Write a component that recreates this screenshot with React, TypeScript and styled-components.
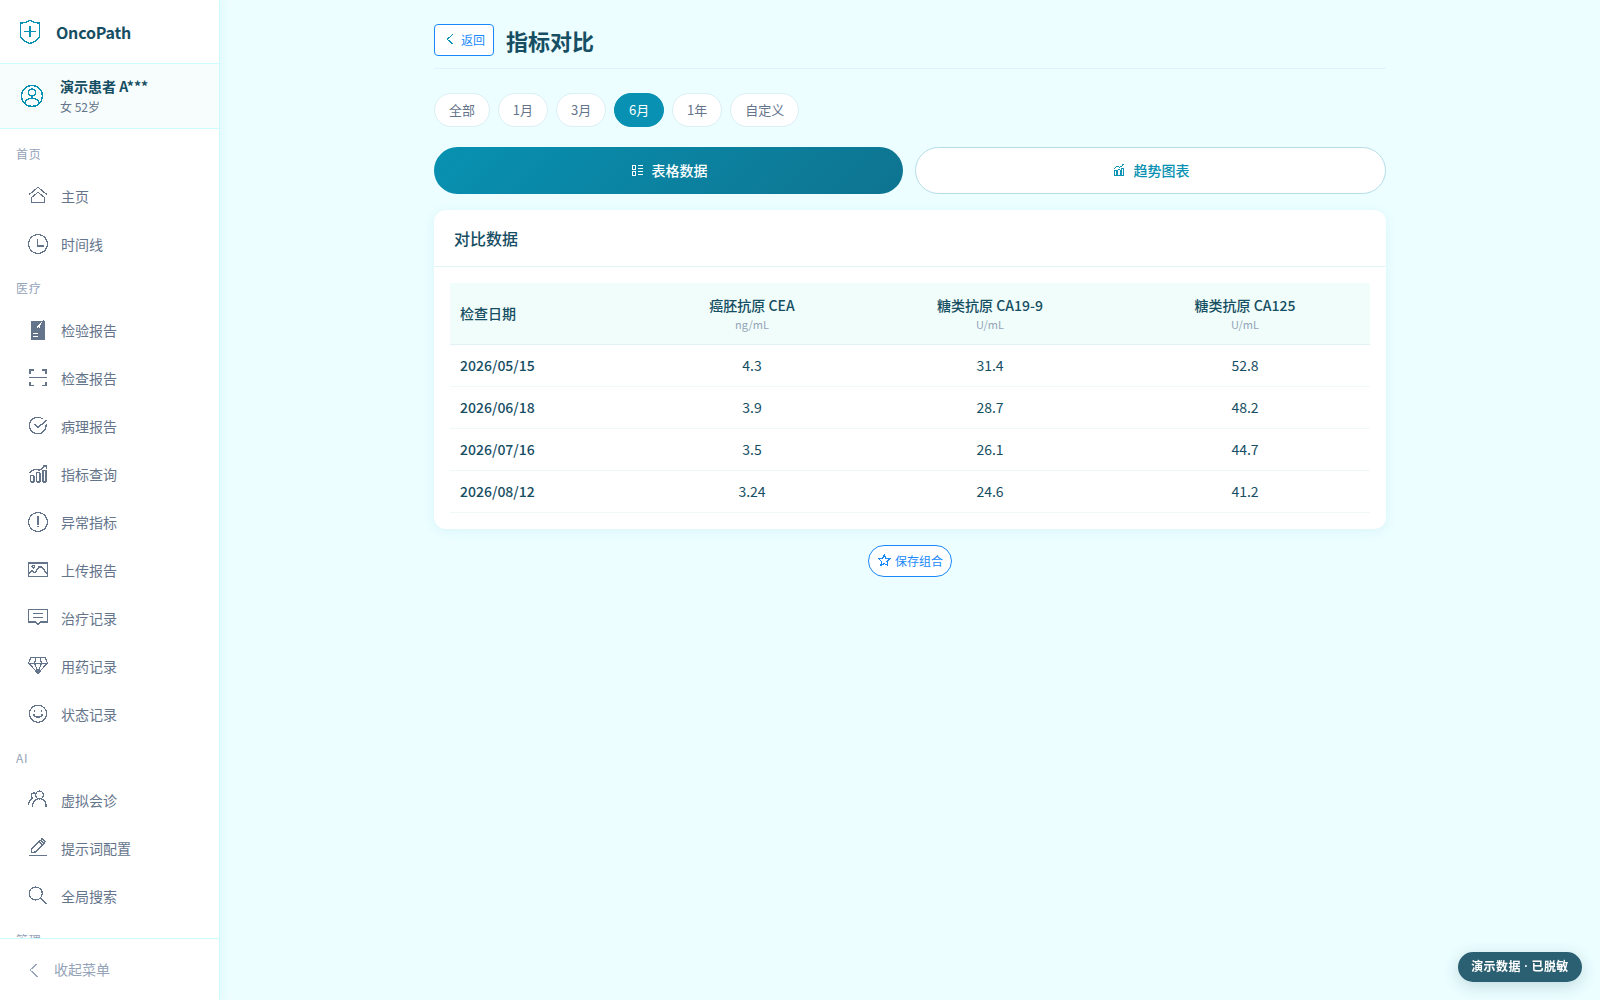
import React from "react";
import styled, { createGlobalStyle, css } from "styled-components";

const Global = createGlobalStyle`
  *, *::before, *::after { box-sizing: border-box; }
  html, body { margin: 0; padding: 0; }
  body {
    background: #ecfeff;
    color: #164e63;
    font-family: "Noto Sans CJK SC", sans-serif;
    font-size: 14px;
    line-height: 1.5;
    overflow: hidden;
  }
  button { font-family: inherit; margin: 0; cursor: pointer; }
`;

/* ---------- icons ---------- */

const Svg = styled.svg<{ $size: number; $color?: string; $weight: number }>`
  display: block;
  flex: none;
  width: ${(p) => p.$size}px;
  height: ${(p) => p.$size}px;
  overflow: visible;
  fill: none;
  stroke: currentColor;
  stroke-width: ${(p) => p.$weight};
  shape-rendering: crispEdges;
  ${(p) => p.$color && css`color: ${p.$color};`}
`;

const shapes: Record<string, React.ReactNode> = {
  home: (
    <>
      <path d="M1.3 8.4 10 1.3l8.7 7.1" />
      <path d="M3.5 16.5v-5L10 6.3l6.5 5.2v5z" />
    </>
  ),
  clock: (
    <>
      <circle cx="10" cy="10" r="9.5" />
      <path d="M9.5 5v6.5" />
      <path d="M9 12h6.7" strokeWidth="2" />
    </>
  ),
  description: (
    <>
      <path d="M3 1h11.2L15.6.3 17 1v18.2l-1 .8H3z" fill="currentColor" stroke="none" />
      <path d="M13.6 2.4 9.2 7.6M11.6 5.8v2" stroke="#fff" />
      <path d="M5 13.5h5M5 16.5h5" stroke="#fff" strokeWidth="1" />
    </>
  ),
  scan: (
    <>
      <path d="M2 6V2h4M14 2h4v4M2 13.5v4h4M14 17.5h4v-4" strokeWidth="1.5" />
      <path d="M1 9.5h18" />
    </>
  ),
  passed: (
    <>
      <path d="M14.8 2.9A8.3 8.3 0 1 0 18 8.5" />
      <path d="m6.2 8 3.8 3.4 8.6-7" strokeWidth="1.4" />
    </>
  ),
  chart: (
    <>
      <rect x="2.6" y="11.5" width="3.5" height="6.5" rx="1" strokeWidth="1.4" />
      <rect x="8.6" y="8.6" width="3.4" height="9.4" rx="1" strokeWidth="1.6" />
      <rect x="14.7" y="6.4" width="3.5" height="11.6" rx="1" strokeWidth="1.6" />
      <path d="m1.2 8.6 5.6-3.4 4.7 1 6.3-4.6" strokeWidth="1.3" />
      <path d="M14.6 1.6h3.8v3" />
    </>
  ),
  chartSmall: (
    <>
      <path d="M3.6 10.7h3.2v7H3.6zM8.5 9.3h3.2v8.4H8.5zM13.6 7.5h3.2v10.2h-3.2z" />
      <path d="m3 8.3 4.3-3.4 4 1.2L16 2.6M14.5 2.8h2.8M3 17.7h14" />
    </>
  ),
  warning: (
    <>
      <circle cx="10" cy="10" r="9.5" />
      <path d="M10 4v8.5M10 14v1.2" strokeWidth="2" />
    </>
  ),
  photo: (
    <>
      <rect x=".5" y="2.5" width="19" height="14" />
      <path d="M0 3h20" strokeWidth="2" />
      <circle cx="5.4" cy="6.6" r="1.5" />
      <path d="m1 13.8 2.8-3 3.2 1.8 4-5.8h2.6l6 7.8" strokeWidth="1.4" />
    </>
  ),
  comment: (
    <>
      <path d="M.5 1.5h19v12.6h-6.3L10 16.4l-3.2-2.3H.5z" />
      <path d="M1 13.6h6.4l2.6 2.2 2.6-2.2H19" />
      <path d="M5 5.5h10.4M5 9.5h10.4" />
    </>
  ),
  gem: (
    <>
      <path d="M2.8 1.5h14.4l2.2 5.6L10 17.4.6 7.1z" />
      <path d="M.6 7.1h18.8M8 1.5 6.6 7.1 10 16.6l3.4-9.5L12 1.5M7.6 15h4.8" />
    </>
  ),
  smile: (
    <>
      <circle cx="10" cy="9.7" r="8.6" />
      <path d="M6 7.6 7.4 6.5M12.6 6.5 14 7.6" strokeWidth="1.4" />
      <path d="M5.500 9.800a4.600 4.200 0 0 0 9 0" strokeWidth="1.500" />
    </>
  ),
  friends: (
    <>
      <circle cx="11.500" cy="5" r="3.900" strokeWidth="1.400" />
      <path d="M4.500 16.800c0-4 2.600-6.800 5.400-7.800M13.200 9c2.800 1 5 4 5 7.500h1" strokeWidth="1.400" />
      <path d="M7 2.800C4.600 2.800 3.500 4 3.500 5.600s.8 2.400 2 2.900M4.600 8.600C2 9.800.6 12 .6 14.800" strokeWidth="1.400" />
    </>
  ),
  edit: (
    <>
      <path d="M1 17.600h18" />
      <path d="m3.500 14.500.3-3.500L12.800 2.200l3.200 2.900-9 9z" strokeWidth="1.400" />
      <path d="m11 3.900 3.300 3M12.700 1.500l1.400-.8 2.800 2.700-1 1.700" strokeWidth="1.400" />
    </>
  ),
  search: (
    <>
      <circle cx="7.800" cy="7.500" r="6.500" />
      <path d="m12.500 12.300 6.300 5.700" strokeWidth="1.500" />
    </>
  ),
  left: <path d="M13.500 3.500 6 10l7.500 6.700" />,
  shield: (
    <>
      <path d="M10 .4C7.500 2 5 2.500 2 2.600v10.700c.4 3.200 4.200 4.800 8 6.300 3.800-1.500 7.600-3.100 8-6.300V2.600C15 2.500 12.500 2 10 .4z" />
      <path d="M10 5v9M5.200 9.500h9.600" />
    </>
  ),
  user: (
    <>
      <circle cx="10" cy="10" r="9.500" />
      <circle cx="10" cy="6.800" r="3.200" />
      <path d="M3.600 16.800c.6-3 3.300-4.900 6.400-4.900s5.800 1.900 6.400 4.900" />
    </>
  ),
  list: (
    <>
      <path d="M3.500 3.500h5v6h-5zM3.500 11.500h5v6h-5z" />
      <path d="M11.500 4h7M11.500 8h7M11.500 12.500h7M11.500 16.500h7" />
    </>
  ),
  star: <path d="m10 2.600 2.300 4.900 5.300.7-3.900 3.700 1 5.400L10 14.700l-4.700 2.600 1-5.400-3.900-3.700 5.300-.7z" />,
};

function Icon({ name, size = 20, color, weight = 1.2 }: { name: string; size?: number; color?: string; weight?: number }) {
  return (
    <Svg viewBox="0 0 20 20" $size={size} $color={color} $weight={weight}>
      {shapes[name]}
    </Svg>
  );
}

/* ---------- shell ---------- */

const Shell = styled.div`
  display: flex;
  height: 100vh;
`;

const Sidebar = styled.aside`
  display: flex;
  flex-direction: column;
  flex: none;
  width: 220px;
  background: #fff;
  border-right: 1px solid #cffafe;
  box-shadow: 2px 0 8px rgba(8, 145, 178, 0.06);
`;

const Brand = styled.div`
  display: flex;
  align-items: center;
  gap: 14px;
  height: 64px;
  padding: 1px 18px 0;
  border-bottom: 1px solid #cffafe;
  font-size: 16px;
  font-weight: 700;
  letter-spacing: -0.2px;
`;

const Patient = styled.div`
  display: flex;
  align-items: center;
  gap: 17px;
  height: 65px;
  padding: 0 21px;
  background: #f7fdfd;
  border-bottom: 1px solid #cffafe;
`;

const PatientName = styled.div`
  font-size: 14px;
  font-weight: 700;
  line-height: 21px;
`;

const PatientMeta = styled.div`
  font-size: 12px;
  line-height: 18px;
  margin-top: 1px;
  color: #64748b;
`;

const Menu = styled.nav`
  flex: 1;
  min-height: 0;
  overflow: hidden;
  padding-top: 5px;
`;

const SectionTitle = styled.div`
  height: 38px;
  padding: 11px 16px 0;
  font-size: 12px;
  line-height: 18px;
  letter-spacing: 0.8px;
  color: #94a3b8;
`;

const MenuItem = styled.a`
  display: flex;
  align-items: center;
  gap: 13px;
  height: 44px;
  margin: 2px 8px;
  padding: 0 20px;
  color: #64748b;
  font-size: 14px;

  & + & {
    margin-top: 4px;
  }
`;

const Collapse = styled.div`
  display: flex;
  align-items: center;
  gap: 10px;
  height: 62px;
  padding: 0 24px;
  border-top: 1px solid #cffafe;
  color: #94a3b8;
`;

/* ---------- page ---------- */

const Main = styled.main`
  flex: 1;
  min-width: 0;
`;

const Page = styled.div`
  display: flex;
  flex-direction: column;
  max-width: 1000px;
  margin: 0 auto;
  padding: 24px;
`;

const PageHead = styled.header`
  display: flex;
  align-items: flex-start;
  gap: 12px;
  height: 45px;
  border-bottom: 1px solid #e0f2fe;
`;

const OutlineButton = styled.button<{ $round?: boolean }>`
  display: flex;
  align-items: center;
  gap: 3.6px;
  height: 32px;
  padding: 0 8px 1px;
  border: 1px solid #1989fa;
  border-radius: ${(p) => (p.$round ? "16px" : "4px")};
  background: #fff;
  color: #1989fa;
  font-size: 12px;
`;

const Title = styled.h1`
  margin: 0;
  font-size: 22px;
  line-height: 32px;
  font-weight: 700;
`;

const Chips = styled.div`
  display: flex;
  gap: 8px;
  margin-top: 24px;
`;

const Chip = styled.button<{ $active?: boolean }>`
  height: 34px;
  padding: 0 13.95px 2px;
  border: 1px solid ${(p) => (p.$active ? "#0891b2" : "#dbeff4")};
  border-radius: 17px;
  background: ${(p) => (p.$active ? "#0891b2" : "#fff")};
  color: ${(p) => (p.$active ? "#fff" : "#64748b")};
  font-size: 13px;
`;

const Tabs = styled.div`
  display: flex;
  gap: 12px;
  height: 47px;
  margin: 20px 0 16px;
`;

const Tab = styled.button<{ $active?: boolean }>`
  display: flex;
  flex: 1;
  align-items: center;
  justify-content: center;
  gap: 8px;
  padding: 0 0 2px;
  border: ${(p) => (p.$active ? "0" : "1px solid #b5dde8")};
  border-radius: 24px;
  background: ${(p) => (p.$active ? "linear-gradient(135deg, #0891b2, #0e7490)" : "#fff")};
  color: ${(p) => (p.$active ? "#fff" : "#0891b2")};
  font-size: 14px;
  font-weight: 500;
`;

const Card = styled.section`
  border-radius: 12px;
  background: #fff;
  box-shadow: 0 2px 12px rgba(8, 145, 178, 0.08);
`;

const CardTitle = styled.h2`
  margin: 0;
  height: 57px;
  padding: 16px 20px;
  border-bottom: 1px solid #e0f7fa;
  font-size: 16px;
  line-height: 24px;
  font-weight: 500;
`;

const CardBody = styled.div`
  padding: 16px;
`;

const Table = styled.table`
  width: 100%;
  table-layout: fixed;
  border-collapse: separate;
  border-spacing: 0;
`;

const Th = styled.th<{ $width: number; $left?: boolean }>`
  width: ${(p) => p.$width}px;
  height: 62px;
  padding: ${(p) => (p.$left ? "0" : "1px")} 10px 0;
  background: #f0fdfa;
  border-bottom: 1px solid #e0f2f7;
  text-align: ${(p) => (p.$left ? "left" : "center")};
  font-size: 14px;
  line-height: 21px;
  font-weight: 500;
`;

const Unit = styled.div`
  color: #94a3b8;
  font-size: 11px;
  line-height: 17px;
  font-weight: 400;
`;

const Td = styled.td<{ $date?: boolean }>`
  height: 42px;
  padding: 0 10px;
  border-bottom: 1px solid #f0f9fa;
  text-align: ${(p) => (p.$date ? "left" : "center")};
  font-weight: ${(p) => (p.$date ? 500 : 400)};
  font-size: 14px;
  line-height: 21px;
`;

const Actions = styled.div`
  display: flex;
  justify-content: center;
  margin-top: 16px;
`;

const DemoBadge = styled.div`
  position: fixed;
  right: 18px;
  bottom: 18px;
  width: 124px;
  height: 30px;
  border-radius: 15px;
  background: rgba(22, 78, 99, 0.9);
  box-shadow: 0 4px 16px rgba(22, 78, 99, 0.2);
  color: #fff;
  font-family: "Noto Sans", "Noto Sans CJK SC", sans-serif;
  font-size: 12px;
  line-height: 30px;
  font-weight: 600;
  letter-spacing: 0.4px;
  text-align: center;
  white-space: nowrap;
`;

const sections = [
  { title: "首页", items: [["home", "主页"], ["clock", "时间线"]] },
  {
    title: "医疗",
    items: [
      ["description", "检验报告"],
      ["scan", "检查报告"],
      ["passed", "病理报告"],
      ["chart", "指标查询"],
      ["warning", "异常指标"],
      ["photo", "上传报告"],
      ["comment", "治疗记录"],
      ["gem", "用药记录"],
      ["smile", "状态记录"],
    ],
  },
  { title: "AI", items: [["friends", "虚拟会诊"], ["edit", "提示词配置"], ["search", "全局搜索"]] },
  { title: "管理", items: [] },
];

const ranges = ["全部", "1月", "3月", "6月", "1年", "自定义"];

const columns = [
  { name: "癌胚抗原 CEA", unit: "ng/mL", width: 216 },
  { name: "糖类抗原 CA19-9", unit: "U/mL", width: 260 },
  { name: "糖类抗原 CA125", unit: "U/mL", width: 250 },
];

const rows = [
  ["2026/05/15", "4.3", "31.4", "52.8"],
  ["2026/06/18", "3.9", "28.7", "48.2"],
  ["2026/07/16", "3.5", "26.1", "44.7"],
  ["2026/08/12", "3.24", "24.6", "41.2"],
];

export default function App() {
  return (
    <>
      <Global />
      <Shell>
        <Sidebar>
          <Brand>
            <Icon name="shield" size={24} color="#0891b2" />
            <span>OncoPath</span>
          </Brand>
          <Patient>
            <Icon name="user" size={22} color="#0891b2" />
            <div>
              <PatientName>演示患者 A***</PatientName>
              <PatientMeta>女 52岁</PatientMeta>
            </div>
          </Patient>
          <Menu>
            {sections.map((section) => (
              <React.Fragment key={section.title}>
                <SectionTitle>{section.title}</SectionTitle>
                {section.items.map(([icon, label]) => (
                  <MenuItem key={label}>
                    <Icon name={icon} />
                    <span>{label}</span>
                  </MenuItem>
                ))}
              </React.Fragment>
            ))}
          </Menu>
          <Collapse>
            <Icon name="left" />
            <span>收起菜单</span>
          </Collapse>
        </Sidebar>
        <Main>
          <Page>
            <PageHead>
              <OutlineButton>
                <Icon name="left" size={14.4} color="#0891b2" weight={1.5} />
                返回
              </OutlineButton>
              <Title>指标对比</Title>
            </PageHead>
            <Chips>
              {ranges.map((r) => (
                <Chip key={r} $active={r === "6月"}>{r}</Chip>
              ))}
            </Chips>
            <Tabs>
              <Tab $active>
                <Icon name="list" size={14} weight={1.4} />
                表格数据
              </Tab>
              <Tab>
                <Icon name="chartSmall" size={14} weight={1.4} />
                趋势图表
              </Tab>
            </Tabs>
            <Card>
              <CardTitle>对比数据</CardTitle>
              <CardBody>
                <Table>
                  <thead>
                    <tr>
                      <Th $width={194} $left>检查日期</Th>
                      {columns.map((c) => (
                        <Th key={c.name} $width={c.width}>
                          {c.name}
                          <Unit>{c.unit}</Unit>
                        </Th>
                      ))}
                    </tr>
                  </thead>
                  <tbody>
                    {rows.map((row) => (
                      <tr key={row[0]}>
                        {row.map((v, i) => (
                          <Td key={i} $date={i === 0}>{v}</Td>
                        ))}
                      </tr>
                    ))}
                  </tbody>
                </Table>
              </CardBody>
            </Card>
            <Actions>
              <OutlineButton $round>
                <Icon name="star" size={14.4} weight={1.4} />
                保存组合
              </OutlineButton>
            </Actions>
          </Page>
        </Main>
      </Shell>
      <DemoBadge>演示数据 · 已脱敏</DemoBadge>
    </>
  );
}
